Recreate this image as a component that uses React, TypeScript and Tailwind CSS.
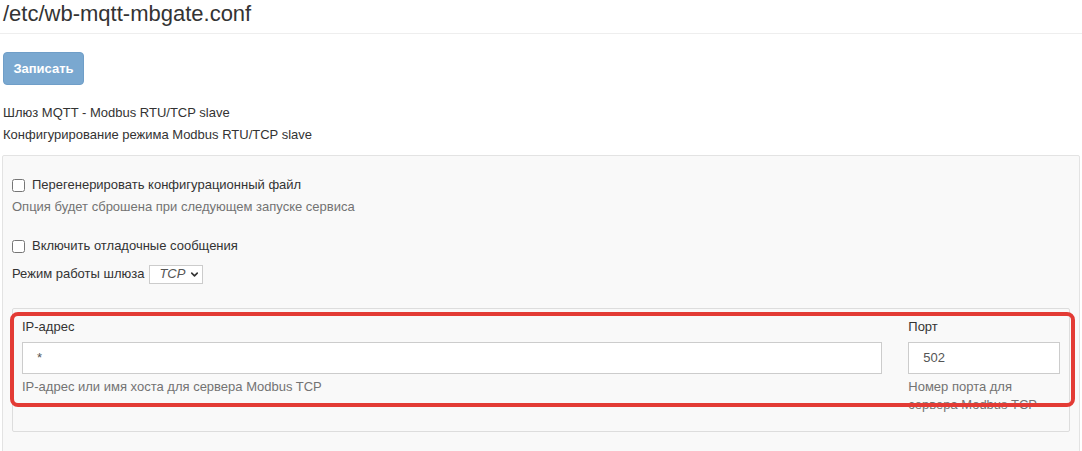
import { ChevronDown } from "lucide-react";

const FONT = "font-['Liberation_Sans',Arial,'Noto_Sans',sans-serif]";

function Check({ label }: { label: string }) {
  return (
    <label className="flex items-center h-[20px]">
      <input type="checkbox" className="m-0 w-[13px] h-[13px]" />
      <span className="ml-[7px]">{label}</span>
    </label>
  );
}

function Field({
  label,
  value,
  help,
  className,
}: {
  label: string;
  value: string;
  help: string;
  className?: string;
}) {
  return (
    <div className={className}>
      <div className="h-[20px] leading-[20px] mt-[8px]">{label}</div>
      <div className="mt-[5px] h-[32px] border border-[#ccc] bg-white px-[14px] flex items-center text-[#555]">
        {value}
      </div>
      <div className="mt-[4px] leading-[18px] text-[#737373]">{help}</div>
    </div>
  );
}

export default function App() {
  return (
    <div
      className={`relative w-[1082px] h-[451px] overflow-hidden bg-white text-[13px] text-[#333] ${FONT}`}
    >
      <h1 className="pl-[3px] pt-[1px] text-[22px] leading-[26px] font-normal">
        /etc/wb-mqtt-mbgate.conf
      </h1>
      <hr className="mt-[6px] border-0 border-t border-[#eee]" />

      <div className="pl-[3px] mt-[18px]">
        <button
          disabled
          className="w-[81px] h-[33px] rounded-[4px] bg-[#7aa8d0] border border-[#6f9ec8] text-white font-bold text-[13px]"
        >
          Записать
        </button>
      </div>

      <div className="pl-[3px] mt-[17px] leading-[22px]">
        <div>Шлюз MQTT - Modbus RTU/TCP slave</div>
        <div>Конфигурирование режима Modbus RTU/TCP slave</div>
      </div>

      <div className="ml-[2px] w-[1078px] mt-[9px] border border-[#e3e3e3] bg-[#f9f9f9] px-[9px] pt-[19px] pb-[20px] rounded-[2px]">
        <Check label="Перегенерировать конфигурационный файл" />
        <div className="mt-[2px] leading-[20px] text-[#737373]">
          Опция будет сброшена при следующем запуске сервиса
        </div>
        <div className="mt-[19px]">
          <Check label="Включить отладочные сообщения" />
        </div>
        <div className="mt-[8px] flex items-center h-[20px]">
          <span>Режим работы шлюза</span>
          <div className="ml-[5px] h-[19px] w-[54px] border border-[#ccc] bg-white flex items-center pl-[9px] gap-[4px]">
            <span className="italic text-[#555]">TCP</span>
            <ChevronDown size={11} strokeWidth={3.5} className="text-[#333]" />
          </div>
        </div>

        <div className="mt-[24px] w-[1058px] h-[124px] border border-[#ddd] bg-[#f9f9f9] rounded-[2px] px-[9px] flex gap-[26px]">
          <Field
            className="w-[862px]"
            label="IP-адрес"
            value="*"
            help="IP-адрес или имя хоста для сервера Modbus TCP"
          />
          <Field
            className="w-[152px]"
            label="Порт"
            value="502"
            help="Номер порта для сервера Modbus TCP"
          />
        </div>
      </div>

      <div className="absolute left-[10px] top-[312px] w-[1065px] h-[95px] border-4 border-[#e33b35] rounded-[8px] pointer-events-none" />
    </div>
  );
}
